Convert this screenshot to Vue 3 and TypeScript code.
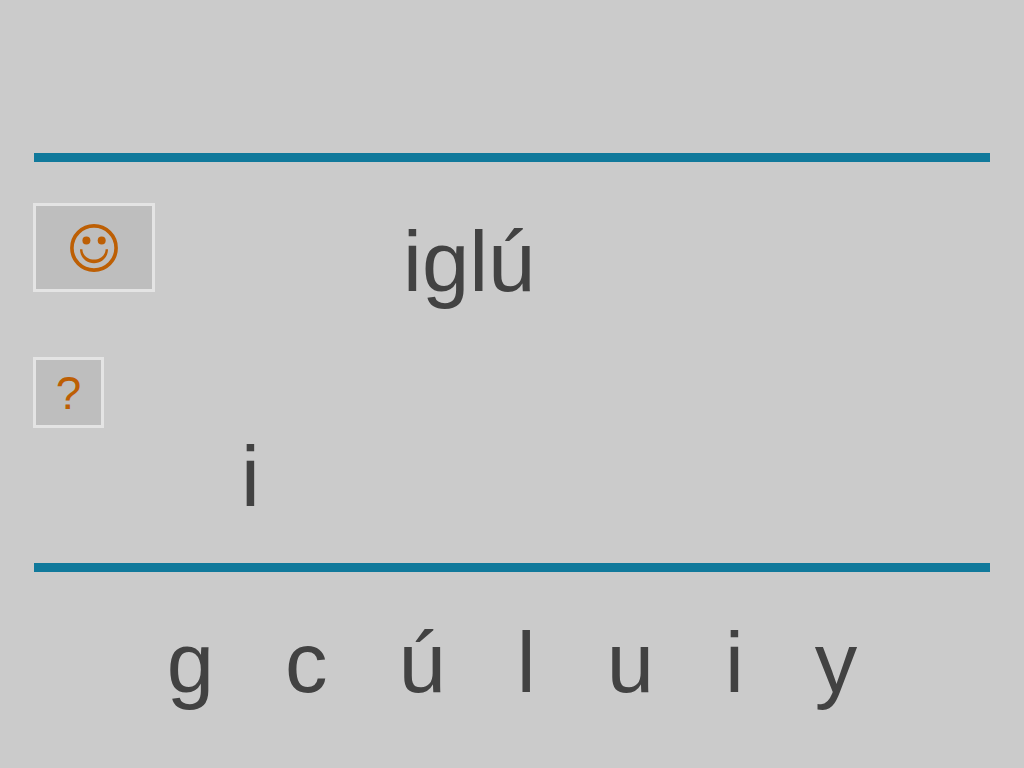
<script setup lang="ts">
import { ref } from 'vue'

const word = 'iglú'
const typed = ref<string>('i')
const letters: string[] = ['g', 'c', 'ú', 'l', 'u', 'i', 'y']

function addLetter(letter: string): void {
  if (typed.value.length < word.length) typed.value += letter
}

function clearTyped(): void {
  typed.value = ''
}
</script>

<template>
  <main class="game">
    <section class="board">
      <div class="controls">
        <button class="control control-face" type="button" aria-label="Listo">
          <svg class="face" viewBox="0 0 48 48" aria-hidden="true">
            <circle cx="24" cy="24" r="22.1" fill="none" stroke="currentColor" stroke-width="3.6" />
            <circle cx="16.4" cy="16.4" r="4" fill="currentColor" />
            <circle cx="31.7" cy="16.4" r="4" fill="currentColor" />
            <path
              d="M10 25.2C10 33.3 16.2 39.2 24 39.2S38 33.3 38 25.2H35.6C35.4 31.4 30.4 35.6 24 35.6S12.6 31.4 12.4 25.2Z"
              fill="currentColor"
            />
          </svg>
        </button>
        <button class="control control-help" type="button" @click="clearTyped">?</button>
      </div>
      <div class="words">
        <h1 class="target">{{ word }}</h1>
        <output class="typed">{{ typed }}</output>
      </div>
    </section>
    <section class="letters">
      <button
        v-for="letter in letters"
        :key="letter"
        class="letter"
        type="button"
        @click="addLetter(letter)"
      >{{ letter }}</button>
    </section>
  </main>
</template>

<style>
body {
  background: #cbcbcb;
}
</style>

<style scoped>
.game {
  box-sizing: border-box;
  min-height: 100vh;
  padding: 153px 34px 0;
  background: #cbcbcb;
  color: #424242;
  font-family: "Liberation Sans", Arial, sans-serif;
}

.board {
  display: grid;
  grid-template-columns: 207px 1fr;
  box-sizing: border-box;
  min-height: 419px;
  border-top: 9px solid #10799b;
  border-bottom: 9px solid #10799b;
}

.controls {
  display: flex;
  flex-direction: column;
  align-items: flex-start;
  gap: 65px;
  margin-left: -1px;
  padding-top: 41px;
}

.control {
  display: flex;
  align-items: center;
  justify-content: center;
  box-sizing: border-box;
  padding: 0;
  border: 3px solid #e4e4e4;
  background: #bebebe;
  color: #bd5f04;
  font: 46px/1 "Liberation Sans", Arial, sans-serif;
  cursor: pointer;
}

.control-face {
  width: 122px;
  height: 89px;
}

.control-help {
  width: 71px;
  height: 71px;
}

.face {
  width: 48px;
  height: 48px;
}

.words {
  display: flex;
  flex-direction: column;
  align-items: flex-start;
  gap: 131px;
  padding-top: 58px;
  font-size: 85px;
  line-height: 84px;
}

.target {
  margin: 0 0 0 162px;
  font-size: inherit;
  font-weight: 400;
}

.letters {
  display: flex;
  justify-content: center;
  gap: 71px;
  padding-top: 49px;
}

.letter {
  padding: 0;
  border: 0;
  background: none;
  color: inherit;
  font: 85px/84px "Liberation Sans", Arial, sans-serif;
  cursor: pointer;
}
</style>
